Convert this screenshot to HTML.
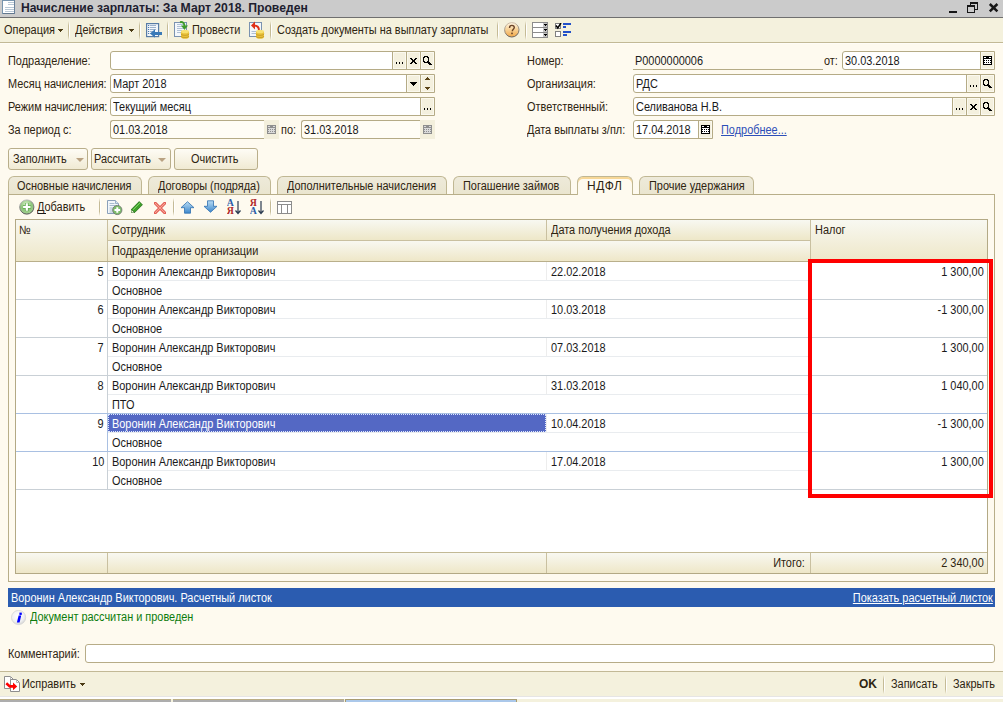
<!DOCTYPE html>
<html><head><meta charset="utf-8">
<style>
*{margin:0;padding:0;box-sizing:border-box}
html,body{width:1003px;height:702px;overflow:hidden;position:relative;background:#FEFAEF;font-family:"Liberation Sans",sans-serif;font-size:11px;color:#000}
.a{position:absolute}
.t{position:absolute;white-space:nowrap;line-height:13px;font-size:12px;color:#2E2410;transform:scaleX(0.91);transform-origin:0 0}
.t[style*="right:"]{transform-origin:100% 0}
.k{color:#1A1A1A}
.fld{position:absolute;background:#fff;border:1px solid #B5AB86;border-radius:3px 0 0 3px;height:19px}
.fb{position:absolute;height:17px;width:14px;background:#F4F0DE;border-left:1px solid #B5AB86;box-shadow:inset 1px 1px 0 #FBF9EF,inset -1px -1px 0 #FBF9EF}
.sep{position:absolute;width:2px;background:linear-gradient(rgba(244,241,221,0),#C5BB96 25%,#C5BB96 75%,rgba(244,241,221,0)) 0 0/1px 100% no-repeat,linear-gradient(rgba(255,255,255,0),#FFFFFF 25%,#FFFFFF 75%,rgba(255,255,255,0)) 1px 0/1px 100% no-repeat}
.btn{position:absolute;height:22px;border:1px solid #B9AE8A;border-radius:3px;background:linear-gradient(#FEFCF5,#F0EAD3)}
.tab{position:absolute;top:176px;height:18px;border:1px solid #C0B793;border-bottom:none;border-radius:6px 6px 0 0;background:linear-gradient(#EEEADA,#EAE5CF)}
.hdr{position:absolute;background:linear-gradient(#F8F8F1,#EEE7C8)}
.rl{position:absolute;height:1px;background:#C9D0D6}
.sl{position:absolute;height:1px;background:#E9ECEF}
</style></head><body>

<!-- title bar -->
<div class="a" style="left:0;top:0;width:1003px;height:17px;background:#CBCBCB"></div>
<div class="a" style="left:0;top:17px;width:1003px;height:1px;background:#6F6F6F"></div>
<svg class="a" style="left:2px;top:0" width="13" height="14" viewBox="0 0 13 14" shape-rendering="crispEdges">
  <rect x="0" y="0" width="13" height="14" fill="#7794AE"/>
  <rect x="1" y="1" width="11" height="12" fill="#FFFFFF"/>
  <rect x="1" y="13" width="12" height="1" fill="#62788E"/><rect x="12" y="0" width="1" height="14" fill="#68809A"/>
  <g fill="#B9C8D6"><rect x="6" y="2" width="6" height="1"/><rect x="6" y="4" width="6" height="1"/><rect x="3" y="7" width="9" height="1"/><rect x="3" y="9" width="9" height="1"/><rect x="3" y="11" width="9" height="1"/></g>
</svg>
<div class="t" style="left:21px;top:1px;font-size:12.2px;line-height:14px;font-weight:bold;color:#1E1E30;transform:none">Начисление зарплаты: За Март 2018. Проведен</div>
<svg class="a" style="left:945px;top:0px" width="58" height="17" viewBox="0 0 58 17" shape-rendering="crispEdges">
  <rect x="4" y="11" width="8" height="2" fill="#161616"/>
  <g fill="#161616">
    <rect x="25" y="2" width="8" height="2"/><rect x="32" y="2" width="1" height="8"/><rect x="29" y="9" width="4" height="1"/><rect x="25" y="2" width="1" height="3"/>
    <rect x="22" y="5" width="8" height="2"/><rect x="22" y="5" width="1" height="8"/><rect x="29" y="5" width="1" height="8"/><rect x="22" y="12" width="8" height="1"/>
  </g>
  <path d="M44.8 4l7.6 7.4M52.4 4l-7.6 7.4" stroke="#161616" stroke-width="2.5" shape-rendering="auto"/>
</svg>

<!-- top toolbar -->
<div class="a" style="left:0;top:18px;width:1003px;height:24px;background:#F4F1DD"></div>
<div class="a" style="left:0;top:42px;width:1003px;height:1px;background:#C2B996"></div>
<div class="a" style="left:0;top:43px;width:1003px;height:1px;background:#FFFDF7"></div>

<div class="t" style="left:4px;top:24px">Операция</div>
<svg class="a" style="left:58px;top:29px" width="5" height="3" shape-rendering="crispEdges"><path d="M0 0h5v1h-1v1h-1v1h-1v-1h-1v-1h-1z" fill="#4A3A14"/></svg>
<div class="sep" style="left:68px;top:21px;height:19px"></div>
<div class="t" style="left:75px;top:24px">Действия</div>
<svg class="a" style="left:129px;top:29px" width="5" height="3" shape-rendering="crispEdges"><path d="M0 0h5v1h-1v1h-1v1h-1v-1h-1v-1h-1z" fill="#4A3A14"/></svg>
<div class="sep" style="left:139px;top:21px;height:19px"></div>
<svg class="a" style="left:145px;top:22px" width="18" height="16" viewBox="0 0 18 16">
  <rect x="1.6" y="1.6" width="12" height="13" fill="#F3F7FB" stroke="#587CA6" stroke-width="1.2"/>
  <path d="M5 3.5h6M5 5.5h6M5 7.5h6M5 9.5h3M5 11.5h2" stroke="#9DB2CC" stroke-width="1"/>
  <path d="M3 3.5h1.2M3 5.5h1.2M3 7.5h1.2M3 9.5h1.2M3 11.5h1.2" stroke="#4A78B0" stroke-width="1"/>
  <rect x="9" y="10" width="8" height="3" fill="#3A7AB8"/>
  <path d="M5 11.5L10 7.3v8.4z" fill="#3A7AB8"/>
</svg>
<div class="sep" style="left:167px;top:21px;height:19px"></div>
<svg class="a" style="left:173px;top:21px" width="18" height="18" viewBox="0 0 18 18">
  <rect x="1.5" y="1.5" width="12" height="14" fill="#F3F7FB" stroke="#7A92B0" stroke-width="1"/>
  <path d="M4 3.5h7M4 5.5h7M4 7.5h7M4 9.5h5M4 11.5h4" stroke="#AFC0D6" stroke-width="1"/>
  <path d="M7 1.2c3 -0.5 4.5 1 4.5 4" fill="none" stroke="#3E9A2A" stroke-width="2"/>
  <path d="M8 4.5h7l-3.5 4.5z" fill="#3E9A2A"/>
  <path d="M8 10.5v5.5a4 1.8 0 0 0 8 0v-5.5z" fill="#E8C23A"/>
  <ellipse cx="12" cy="10.5" rx="4" ry="1.8" fill="#F8E070"/>
  <path d="M8 12.8a4 1.6 0 0 0 8 0M8 15a4 1.6 0 0 0 8 0" fill="none" stroke="#C09020" stroke-width="0.7"/>
</svg>
<div class="t" style="left:192px;top:24px">Провести</div>
<svg class="a" style="left:248px;top:21px" width="18" height="18" viewBox="0 0 18 18">
  <rect x="1.5" y="1.5" width="12" height="14" fill="#F3F7FB" stroke="#7A92B0" stroke-width="1"/>
  <path d="M3.5 10.5h5M3.5 12.5h5" stroke="#AFC0D6" stroke-width="1"/>
  <path d="M6 4.5c3.5 0 5 1.5 5 5" fill="none" stroke="#E03018" stroke-width="2"/>
  <path d="M3 4.5l4-4v8z" fill="#E03018"/>
  <path d="M8 10.5v5.5a4 1.8 0 0 0 8 0v-5.5z" fill="#E8C23A"/>
  <ellipse cx="12" cy="10.5" rx="4" ry="1.8" fill="#F8E070"/>
  <path d="M8 12.8a4 1.6 0 0 0 8 0M8 15a4 1.6 0 0 0 8 0" fill="none" stroke="#C09020" stroke-width="0.7"/>
</svg>
<div class="sep" style="left:270px;top:21px;height:19px"></div>
<div class="t" style="left:277px;top:24px">Создать документы на выплату зарплаты</div>
<div class="sep" style="left:497px;top:21px;height:19px"></div>
<svg class="a" style="left:504px;top:22px" width="16" height="16" viewBox="0 0 16 16">
  <defs><linearGradient id="hg" x1="0" y1="0" x2="0" y2="1"><stop offset="0" stop-color="#FFF6E4"/><stop offset="0.45" stop-color="#F8D49A"/><stop offset="1" stop-color="#F2A848"/></linearGradient>
  <linearGradient id="hs" x1="0" y1="0" x2="0.2" y2="1"><stop offset="0" stop-color="#D8C8B0"/><stop offset="1" stop-color="#6A6460"/></linearGradient></defs>
  <circle cx="7.8" cy="7.8" r="7.2" fill="url(#hg)" stroke="url(#hs)" stroke-width="1"/>
  <path d="M5.5 6c0-1.7 1.1-2.6 2.4-2.6s2.4 0.9 2.4 2.2c0 1.6-2 1.9-2 3.6" fill="none" stroke="#6A4428" stroke-width="1.4"/>
  <rect x="7.2" y="10.6" width="1.6" height="1.6" fill="#6A4428"/>
</svg>
<div class="sep" style="left:525px;top:21px;height:19px"></div>
<svg class="a" style="left:532px;top:22px" width="16" height="16" viewBox="0 0 16 16" shape-rendering="crispEdges">
  <rect x="0" y="0" width="16" height="16" fill="#8C8C8C"/>
  <rect x="1" y="1" width="10" height="4" fill="#fff"/><rect x="1" y="6" width="10" height="4" fill="#fff"/><rect x="1" y="11" width="10" height="4" fill="#fff"/>
  <rect x="11" y="1" width="4" height="4" fill="#C4C4C4"/><rect x="11" y="6" width="4" height="4" fill="#C4C4C4"/><rect x="11" y="11" width="4" height="4" fill="#C4C4C4"/>
  <path d="M12 2h3l-1.5 2z M12 7h3l-1.5 2z M12 12h3l-1.5 2z" fill="#000"/>
</svg>
<svg class="a" style="left:555px;top:23px" width="16" height="14" viewBox="0 0 16 14" shape-rendering="crispEdges">
  <rect x="0" y="0" width="6" height="6" fill="#808080"/><rect x="1" y="1" width="4" height="4" fill="#fff"/>
  <path d="M1 2.5l1.8 2.5 3.2-5" fill="none" stroke="#000" stroke-width="1.5" shape-rendering="auto"/>
  <rect x="0" y="8" width="6" height="6" fill="#808080"/><rect x="1" y="9" width="4" height="4" fill="#fff"/>
  <rect x="8" y="0" width="8" height="2" fill="#2250C8"/><rect x="8" y="3" width="3" height="2" fill="#2250C8"/>
  <rect x="8" y="8" width="8" height="2" fill="#2250C8"/><rect x="8" y="11" width="4" height="2" fill="#2250C8"/>
</svg>


<!-- form fields left -->
<div class="t" style="left:8px;top:55px">Подразделение:</div>
<div class="t" style="left:8px;top:78px">Месяц начисления:</div>
<div class="t" style="left:8px;top:101px">Режим начисления:</div>
<div class="t" style="left:8px;top:124px">За период с:</div>
<div class="fld" style="left:110px;top:51px;width:325px;background:#fff"></div>
<div class="fb" style="left:392px;top:52px"></div>
<svg class="a" style="left:396px;top:62px" width="8" height="2" shape-rendering="crispEdges"><rect x="0" y="0" width="1" height="2" fill="#000"/><rect x="3" y="0" width="1" height="2" fill="#000"/><rect x="6" y="0" width="1" height="2" fill="#000"/></svg>
<div class="fb" style="left:406px;top:52px"></div>
<svg class="a" style="left:410px;top:58px" width="7" height="6" shape-rendering="crispEdges"><g fill="#000"><rect x="0" y="0" width="1" height="1"/><rect x="1" y="0" width="1" height="1"/><rect x="5" y="0" width="1" height="1"/><rect x="6" y="0" width="1" height="1"/><rect x="1" y="1" width="1" height="1"/><rect x="2" y="1" width="1" height="1"/><rect x="4" y="1" width="1" height="1"/><rect x="5" y="1" width="1" height="1"/><rect x="2" y="2" width="1" height="1"/><rect x="3" y="2" width="1" height="1"/><rect x="4" y="2" width="1" height="1"/><rect x="2" y="3" width="1" height="1"/><rect x="3" y="3" width="1" height="1"/><rect x="4" y="3" width="1" height="1"/><rect x="1" y="4" width="1" height="1"/><rect x="2" y="4" width="1" height="1"/><rect x="4" y="4" width="1" height="1"/><rect x="5" y="4" width="1" height="1"/><rect x="0" y="5" width="1" height="1"/><rect x="1" y="5" width="1" height="1"/><rect x="5" y="5" width="1" height="1"/><rect x="6" y="5" width="1" height="1"/></g></svg>
<div class="fb" style="left:420px;top:52px"></div>
<svg class="a" style="left:423px;top:56px" width="9" height="9" shape-rendering="crispEdges"><g fill="#000"><rect x="1" y="0" width="1" height="1"/><rect x="2" y="0" width="1" height="1"/><rect x="3" y="0" width="1" height="1"/><rect x="4" y="0" width="1" height="1"/><rect x="0" y="1" width="1" height="1"/><rect x="1" y="1" width="1" height="1"/><rect x="4" y="1" width="1" height="1"/><rect x="5" y="1" width="1" height="1"/><rect x="0" y="2" width="1" height="1"/><rect x="5" y="2" width="1" height="1"/><rect x="0" y="3" width="1" height="1"/><rect x="5" y="3" width="1" height="1"/><rect x="0" y="4" width="1" height="1"/><rect x="5" y="4" width="1" height="1"/><rect x="0" y="5" width="1" height="1"/><rect x="1" y="5" width="1" height="1"/><rect x="4" y="5" width="1" height="1"/><rect x="5" y="5" width="1" height="1"/><rect x="1" y="6" width="1" height="1"/><rect x="2" y="6" width="1" height="1"/><rect x="3" y="6" width="1" height="1"/><rect x="4" y="6" width="1" height="1"/><rect x="5" y="6" width="1" height="1"/><rect x="6" y="6" width="1" height="1"/><rect x="5" y="7" width="1" height="1"/><rect x="6" y="7" width="1" height="1"/><rect x="7" y="7" width="1" height="1"/><rect x="6" y="8" width="1" height="1"/><rect x="7" y="8" width="1" height="1"/><rect x="8" y="8" width="1" height="1"/></g></svg>
<div class="fld" style="left:110px;top:74px;width:325px;background:#fff"></div>
<div class="t k" style="left:113px;top:78px">Март 2018</div>
<div class="fb" style="left:406px;top:75px"></div>
<svg class="a" style="left:410px;top:82px" width="7" height="4" shape-rendering="crispEdges"><rect x="0" y="0" width="7" height="1" fill="#000"/><rect x="1" y="1" width="5" height="1" fill="#000"/><rect x="2" y="2" width="3" height="1" fill="#000"/><rect x="3" y="3" width="1" height="1" fill="#000"/></svg>
<div class="fb" style="left:420px;top:75px"></div>
<svg class="a" style="left:425px;top:77px" width="5" height="13" shape-rendering="crispEdges"><g fill="#5A4418"><rect x="2" y="0" width="1" height="1"/><rect x="1" y="1" width="3" height="1"/><rect x="0" y="2" width="5" height="1"/><rect x="0" y="10" width="5" height="1"/><rect x="1" y="11" width="3" height="1"/><rect x="2" y="12" width="1" height="1"/></g></svg>
<div class="fld" style="left:110px;top:97px;width:325px;background:#fff"></div>
<div class="t k" style="left:113px;top:101px">Текущий месяц</div>
<div class="fb" style="left:420px;top:98px"></div>
<svg class="a" style="left:424px;top:108px" width="8" height="2" shape-rendering="crispEdges"><rect x="0" y="0" width="1" height="2" fill="#000"/><rect x="3" y="0" width="1" height="2" fill="#000"/><rect x="6" y="0" width="1" height="2" fill="#000"/></svg>
<div class="fld" style="left:110px;top:120px;width:154px;border-right:none;background:#FFFDF5"></div>
<div class="t k" style="left:113px;top:124px">01.03.2018</div>
<div class="a" style="left:264px;top:120px;width:15px;height:19px;background:#F3EFDC"></div>
<svg class="a" style="left:267px;top:125px" width="9" height="9" shape-rendering="crispEdges"><rect x="0" y="0" width="9" height="9" fill="#8E8E8E"/><g fill="#DADADA"><rect x="1" y="1" width="1" height="1"/><rect x="2" y="1" width="1" height="1"/><rect x="6" y="1" width="1" height="1"/><rect x="7" y="1" width="1" height="1"/><rect x="1" y="3" width="1" height="1"/><rect x="2" y="3" width="1" height="1"/><rect x="3" y="3" width="1" height="1"/><rect x="4" y="3" width="1" height="1"/><rect x="5" y="3" width="1" height="1"/><rect x="6" y="3" width="1" height="1"/><rect x="7" y="3" width="1" height="1"/><rect x="1" y="5" width="1" height="1"/><rect x="2" y="5" width="1" height="1"/><rect x="3" y="5" width="1" height="1"/><rect x="4" y="5" width="1" height="1"/><rect x="5" y="5" width="1" height="1"/><rect x="6" y="5" width="1" height="1"/><rect x="7" y="5" width="1" height="1"/><rect x="1" y="7" width="1" height="1"/><rect x="2" y="7" width="1" height="1"/><rect x="3" y="7" width="1" height="1"/><rect x="4" y="7" width="1" height="1"/><rect x="5" y="7" width="1" height="1"/><rect x="6" y="7" width="1" height="1"/><rect x="7" y="7" width="1" height="1"/><rect x="2" y="4" width="1" height="1"/><rect x="4" y="4" width="1" height="1"/><rect x="6" y="4" width="1" height="1"/><rect x="2" y="6" width="1" height="1"/><rect x="4" y="6" width="1" height="1"/><rect x="6" y="6" width="1" height="1"/></g></svg>
<div class="t" style="left:281px;top:124px">по:</div>
<div class="fld" style="left:301px;top:120px;width:119px;border-right:none;background:#FFFDF5"></div>
<div class="t k" style="left:304px;top:124px">31.03.2018</div>
<div class="a" style="left:420px;top:120px;width:15px;height:19px;background:#F3EFDC"></div>
<svg class="a" style="left:423px;top:125px" width="9" height="9" shape-rendering="crispEdges"><rect x="0" y="0" width="9" height="9" fill="#8E8E8E"/><g fill="#DADADA"><rect x="1" y="1" width="1" height="1"/><rect x="2" y="1" width="1" height="1"/><rect x="6" y="1" width="1" height="1"/><rect x="7" y="1" width="1" height="1"/><rect x="1" y="3" width="1" height="1"/><rect x="2" y="3" width="1" height="1"/><rect x="3" y="3" width="1" height="1"/><rect x="4" y="3" width="1" height="1"/><rect x="5" y="3" width="1" height="1"/><rect x="6" y="3" width="1" height="1"/><rect x="7" y="3" width="1" height="1"/><rect x="1" y="5" width="1" height="1"/><rect x="2" y="5" width="1" height="1"/><rect x="3" y="5" width="1" height="1"/><rect x="4" y="5" width="1" height="1"/><rect x="5" y="5" width="1" height="1"/><rect x="6" y="5" width="1" height="1"/><rect x="7" y="5" width="1" height="1"/><rect x="1" y="7" width="1" height="1"/><rect x="2" y="7" width="1" height="1"/><rect x="3" y="7" width="1" height="1"/><rect x="4" y="7" width="1" height="1"/><rect x="5" y="7" width="1" height="1"/><rect x="6" y="7" width="1" height="1"/><rect x="7" y="7" width="1" height="1"/><rect x="2" y="4" width="1" height="1"/><rect x="4" y="4" width="1" height="1"/><rect x="6" y="4" width="1" height="1"/><rect x="2" y="6" width="1" height="1"/><rect x="4" y="6" width="1" height="1"/><rect x="6" y="6" width="1" height="1"/></g></svg>
<!-- form fields right -->
<div class="t" style="left:527px;top:55px">Номер:</div>
<div class="t" style="left:527px;top:78px">Организация:</div>
<div class="t" style="left:527px;top:101px">Ответственный:</div>
<div class="t" style="left:527px;top:124px">Дата выплаты з/пл:</div>
<div class="t k" style="left:635px;top:55px">P0000000006</div>
<div class="a" style="left:633px;top:69px;width:190px;height:1px;background:#B5AB86"></div>
<div class="t" style="left:824px;top:55px">от:</div>
<div class="fld" style="left:842px;top:51px;width:153px;background:#fff"></div>
<div class="t k" style="left:845px;top:55px">30.03.2018</div>
<div class="fb" style="left:980px;top:52px"></div>
<svg class="a" style="left:983px;top:56px" width="9" height="9" shape-rendering="crispEdges"><rect x="0" y="0" width="9" height="9" fill="#000"/><g fill="#fff"><rect x="1" y="1" width="1" height="1"/><rect x="2" y="1" width="1" height="1"/><rect x="6" y="1" width="1" height="1"/><rect x="7" y="1" width="1" height="1"/><rect x="1" y="3" width="1" height="1"/><rect x="2" y="3" width="1" height="1"/><rect x="3" y="3" width="1" height="1"/><rect x="4" y="3" width="1" height="1"/><rect x="5" y="3" width="1" height="1"/><rect x="6" y="3" width="1" height="1"/><rect x="7" y="3" width="1" height="1"/><rect x="1" y="5" width="1" height="1"/><rect x="2" y="5" width="1" height="1"/><rect x="3" y="5" width="1" height="1"/><rect x="4" y="5" width="1" height="1"/><rect x="5" y="5" width="1" height="1"/><rect x="6" y="5" width="1" height="1"/><rect x="7" y="5" width="1" height="1"/><rect x="1" y="7" width="1" height="1"/><rect x="2" y="7" width="1" height="1"/><rect x="3" y="7" width="1" height="1"/><rect x="4" y="7" width="1" height="1"/><rect x="5" y="7" width="1" height="1"/><rect x="6" y="7" width="1" height="1"/><rect x="7" y="7" width="1" height="1"/><rect x="2" y="4" width="1" height="1"/><rect x="4" y="4" width="1" height="1"/><rect x="6" y="4" width="1" height="1"/><rect x="2" y="6" width="1" height="1"/><rect x="4" y="6" width="1" height="1"/><rect x="6" y="6" width="1" height="1"/></g></svg>
<div class="fld" style="left:633px;top:74px;width:362px;background:#fff"></div>
<div class="t k" style="left:636px;top:78px">РДС</div>
<div class="fb" style="left:966px;top:75px"></div>
<svg class="a" style="left:970px;top:85px" width="8" height="2" shape-rendering="crispEdges"><rect x="0" y="0" width="1" height="2" fill="#000"/><rect x="3" y="0" width="1" height="2" fill="#000"/><rect x="6" y="0" width="1" height="2" fill="#000"/></svg>
<div class="fb" style="left:980px;top:75px"></div>
<svg class="a" style="left:983px;top:79px" width="9" height="9" shape-rendering="crispEdges"><g fill="#000"><rect x="1" y="0" width="1" height="1"/><rect x="2" y="0" width="1" height="1"/><rect x="3" y="0" width="1" height="1"/><rect x="4" y="0" width="1" height="1"/><rect x="0" y="1" width="1" height="1"/><rect x="1" y="1" width="1" height="1"/><rect x="4" y="1" width="1" height="1"/><rect x="5" y="1" width="1" height="1"/><rect x="0" y="2" width="1" height="1"/><rect x="5" y="2" width="1" height="1"/><rect x="0" y="3" width="1" height="1"/><rect x="5" y="3" width="1" height="1"/><rect x="0" y="4" width="1" height="1"/><rect x="5" y="4" width="1" height="1"/><rect x="0" y="5" width="1" height="1"/><rect x="1" y="5" width="1" height="1"/><rect x="4" y="5" width="1" height="1"/><rect x="5" y="5" width="1" height="1"/><rect x="1" y="6" width="1" height="1"/><rect x="2" y="6" width="1" height="1"/><rect x="3" y="6" width="1" height="1"/><rect x="4" y="6" width="1" height="1"/><rect x="5" y="6" width="1" height="1"/><rect x="6" y="6" width="1" height="1"/><rect x="5" y="7" width="1" height="1"/><rect x="6" y="7" width="1" height="1"/><rect x="7" y="7" width="1" height="1"/><rect x="6" y="8" width="1" height="1"/><rect x="7" y="8" width="1" height="1"/><rect x="8" y="8" width="1" height="1"/></g></svg>
<div class="fld" style="left:633px;top:97px;width:362px;background:#fff"></div>
<div class="t k" style="left:636px;top:101px">Селиванова Н.В.</div>
<div class="fb" style="left:952px;top:98px"></div>
<svg class="a" style="left:956px;top:108px" width="8" height="2" shape-rendering="crispEdges"><rect x="0" y="0" width="1" height="2" fill="#000"/><rect x="3" y="0" width="1" height="2" fill="#000"/><rect x="6" y="0" width="1" height="2" fill="#000"/></svg>
<div class="fb" style="left:966px;top:98px"></div>
<svg class="a" style="left:970px;top:104px" width="7" height="6" shape-rendering="crispEdges"><g fill="#000"><rect x="0" y="0" width="1" height="1"/><rect x="1" y="0" width="1" height="1"/><rect x="5" y="0" width="1" height="1"/><rect x="6" y="0" width="1" height="1"/><rect x="1" y="1" width="1" height="1"/><rect x="2" y="1" width="1" height="1"/><rect x="4" y="1" width="1" height="1"/><rect x="5" y="1" width="1" height="1"/><rect x="2" y="2" width="1" height="1"/><rect x="3" y="2" width="1" height="1"/><rect x="4" y="2" width="1" height="1"/><rect x="2" y="3" width="1" height="1"/><rect x="3" y="3" width="1" height="1"/><rect x="4" y="3" width="1" height="1"/><rect x="1" y="4" width="1" height="1"/><rect x="2" y="4" width="1" height="1"/><rect x="4" y="4" width="1" height="1"/><rect x="5" y="4" width="1" height="1"/><rect x="0" y="5" width="1" height="1"/><rect x="1" y="5" width="1" height="1"/><rect x="5" y="5" width="1" height="1"/><rect x="6" y="5" width="1" height="1"/></g></svg>
<div class="fb" style="left:980px;top:98px"></div>
<svg class="a" style="left:983px;top:102px" width="9" height="9" shape-rendering="crispEdges"><g fill="#000"><rect x="1" y="0" width="1" height="1"/><rect x="2" y="0" width="1" height="1"/><rect x="3" y="0" width="1" height="1"/><rect x="4" y="0" width="1" height="1"/><rect x="0" y="1" width="1" height="1"/><rect x="1" y="1" width="1" height="1"/><rect x="4" y="1" width="1" height="1"/><rect x="5" y="1" width="1" height="1"/><rect x="0" y="2" width="1" height="1"/><rect x="5" y="2" width="1" height="1"/><rect x="0" y="3" width="1" height="1"/><rect x="5" y="3" width="1" height="1"/><rect x="0" y="4" width="1" height="1"/><rect x="5" y="4" width="1" height="1"/><rect x="0" y="5" width="1" height="1"/><rect x="1" y="5" width="1" height="1"/><rect x="4" y="5" width="1" height="1"/><rect x="5" y="5" width="1" height="1"/><rect x="1" y="6" width="1" height="1"/><rect x="2" y="6" width="1" height="1"/><rect x="3" y="6" width="1" height="1"/><rect x="4" y="6" width="1" height="1"/><rect x="5" y="6" width="1" height="1"/><rect x="6" y="6" width="1" height="1"/><rect x="5" y="7" width="1" height="1"/><rect x="6" y="7" width="1" height="1"/><rect x="7" y="7" width="1" height="1"/><rect x="6" y="8" width="1" height="1"/><rect x="7" y="8" width="1" height="1"/><rect x="8" y="8" width="1" height="1"/></g></svg>
<div class="fld" style="left:633px;top:120px;width:80px;background:#fff"></div>
<div class="t k" style="left:636px;top:124px">17.04.2018</div>
<div class="fb" style="left:698px;top:121px"></div>
<svg class="a" style="left:701px;top:125px" width="9" height="9" shape-rendering="crispEdges"><rect x="0" y="0" width="9" height="9" fill="#000"/><g fill="#fff"><rect x="1" y="1" width="1" height="1"/><rect x="2" y="1" width="1" height="1"/><rect x="6" y="1" width="1" height="1"/><rect x="7" y="1" width="1" height="1"/><rect x="1" y="3" width="1" height="1"/><rect x="2" y="3" width="1" height="1"/><rect x="3" y="3" width="1" height="1"/><rect x="4" y="3" width="1" height="1"/><rect x="5" y="3" width="1" height="1"/><rect x="6" y="3" width="1" height="1"/><rect x="7" y="3" width="1" height="1"/><rect x="1" y="5" width="1" height="1"/><rect x="2" y="5" width="1" height="1"/><rect x="3" y="5" width="1" height="1"/><rect x="4" y="5" width="1" height="1"/><rect x="5" y="5" width="1" height="1"/><rect x="6" y="5" width="1" height="1"/><rect x="7" y="5" width="1" height="1"/><rect x="1" y="7" width="1" height="1"/><rect x="2" y="7" width="1" height="1"/><rect x="3" y="7" width="1" height="1"/><rect x="4" y="7" width="1" height="1"/><rect x="5" y="7" width="1" height="1"/><rect x="6" y="7" width="1" height="1"/><rect x="7" y="7" width="1" height="1"/><rect x="2" y="4" width="1" height="1"/><rect x="4" y="4" width="1" height="1"/><rect x="6" y="4" width="1" height="1"/><rect x="2" y="6" width="1" height="1"/><rect x="4" y="6" width="1" height="1"/><rect x="6" y="6" width="1" height="1"/></g></svg>
<div class="t" style="left:721px;top:124px;color:#2D4FB8;text-decoration:underline">Подробнее...</div>

<!-- buttons -->
<div class="btn" style="left:8px;top:148px;width:80px"></div>
<div class="t" style="left:13px;top:153px">Заполнить</div>
<svg class="a" style="left:76px;top:158px" width="8" height="4"><path d="M0 0h8L4 4z" fill="#B9A282"/></svg>
<div class="btn" style="left:91px;top:148px;width:80px"></div>
<div class="t" style="left:94px;top:153px">Рассчитать</div>
<svg class="a" style="left:158px;top:158px" width="8" height="4"><path d="M0 0h8L4 4z" fill="#B9A282"/></svg>
<div class="btn" style="left:174px;top:148px;width:84px"></div>
<div class="t" style="left:191px;top:153px">Очистить</div>

<!-- panel -->
<div class="a" style="left:8px;top:194px;width:987px;height:388px;border:1px solid #B8AE89"></div>
<div class="tab" style="left:8px;width:134px"><div class="t" style="left:8px;top:3px">Основные начисления</div></div>
<div class="tab" style="left:148px;width:123px"><div class="t" style="left:9px;top:3px">Договоры (подряда)</div></div>
<div class="tab" style="left:277px;width:170px"><div class="t" style="left:9px;top:3px">Дополнительные начисления</div></div>
<div class="tab" style="left:453px;width:118px"><div class="t" style="left:9px;top:3px">Погашение займов</div></div>
<div class="tab" style="left:577px;width:56px;height:19px;background:#FEFAEF;box-shadow:inset 0 2px 0 #F7D796"><div class="t" style="left:9px;top:3px;transform:none;letter-spacing:0.6px">НДФЛ</div></div>
<div class="tab" style="left:639px;width:115px"><div class="t" style="left:9px;top:3px">Прочие удержания</div></div>

<!-- panel toolbar -->
<svg class="a" style="left:19px;top:199px" width="16" height="16" viewBox="0 0 16 16">
  <defs><radialGradient id="ag" cx="0.45" cy="0.3" r="0.75"><stop offset="0" stop-color="#D4EEC4"/><stop offset="0.55" stop-color="#8CC47A"/><stop offset="1" stop-color="#A8D498"/></radialGradient>
  <linearGradient id="agr" x1="0" y1="0" x2="0.3" y2="1"><stop offset="0" stop-color="#C8C8C8"/><stop offset="1" stop-color="#505050"/></linearGradient></defs>
  <circle cx="7.8" cy="8" r="7.1" fill="url(#ag)" stroke="url(#agr)" stroke-width="1"/>
  <path d="M7.8 4v8M3.8 8h8" stroke="#5AA848" stroke-width="3.6"/>
  <path d="M7.8 4.3v7.4M4.1 8h7.4" stroke="#fff" stroke-width="2.2"/>
</svg>
<div class="t" style="left:37px;top:201px">Добавить</div>
<div class="a" style="left:38px;top:213px;width:8px;height:1px;background:#1a1a1a"></div>
<div class="sep" style="left:99px;top:198px;height:18px"></div>
<svg class="a" style="left:107px;top:200px" width="16" height="16" viewBox="0 0 16 16">
  <path d="M0.5 0.5h8l3 3v10h-11z" fill="#F2F6FA" stroke="#8AA0BA"/>
  <path d="M8.5 0.5v3h3" fill="#DCE6F0" stroke="#9AB0C8"/>
  <path d="M2.5 3.5h5M2.5 5.5h6M2.5 8h5M2.5 10h4M2.5 12h4" stroke="#A8BCD0"/>
  <circle cx="10.3" cy="10" r="4.6" fill="#7CBC6A" stroke="#707870" stroke-width="0.9"/>
  <path d="M10.3 7.2v5.6M7.5 10h5.6" stroke="#fff" stroke-width="2"/>
</svg>
<svg class="a" style="left:131px;top:201px" width="12" height="12" viewBox="0 0 12 12">
  <path d="M0.4 8.4L8.2 0.6L11.4 3.8L3.6 11.6Z" fill="#3EA02A" stroke="#1D6A12" stroke-width="0.8"/>
  <path d="M2.2 8.6L9 1.8" stroke="#8CE070" stroke-width="1"/>
  <path d="M0.4 8.4L3.6 11.6L0.2 11.8Z" fill="#F0F0E0" stroke="#1D6A12" stroke-width="0.6"/>
</svg>
<svg class="a" style="left:154px;top:202px" width="12" height="12" viewBox="0 0 12 12">
  <path d="M1.3 1.3l9.4 9.4M10.7 1.3l-9.4 9.4" stroke="#E0524A" stroke-width="3" stroke-linecap="round"/>
  <path d="M1.3 1.3l9.4 9.4M10.7 1.3l-9.4 9.4" stroke="#F6A898" stroke-width="1.1" stroke-linecap="round"/>
</svg>
<div class="sep" style="left:173px;top:198px;height:18px"></div>
<svg class="a" style="left:180px;top:201px" width="15" height="13" viewBox="0 0 15 13">
  <defs><linearGradient id="bu" x1="0" y1="0" x2="0" y2="1"><stop offset="0" stop-color="#B8DCF4"/><stop offset="1" stop-color="#3E88CC"/></linearGradient></defs>
  <path d="M7.5 0.7l6.5 6h-3.5v5.5h-6v-5.5h-3.5z" fill="url(#bu)" stroke="#3070B0" stroke-width="0.8"/>
</svg>
<svg class="a" style="left:203px;top:200px" width="15" height="13" viewBox="0 0 15 13">
  <defs><linearGradient id="bd" x1="0" y1="0" x2="0" y2="1"><stop offset="0" stop-color="#B8DCF4"/><stop offset="1" stop-color="#3E88CC"/></linearGradient></defs>
  <path d="M7.5 12.3l6.5-6h-3.5v-5.5h-6v5.5h-3.5z" fill="url(#bd)" stroke="#3070B0" stroke-width="0.8"/>
</svg>
<svg class="a" style="left:227px;top:199px" width="15" height="16" viewBox="0 0 15 16">
  <text x="-0.3" y="7.3" font-family="Liberation Serif" font-weight="bold" font-size="9.8" fill="#2A5CA8">A</text>
  <text x="-0.3" y="15.3" font-family="Liberation Serif" font-weight="bold" font-size="9.8" fill="#B02828">Я</text>
  <path d="M11 2v12M8.5 11.5l2.5 3 2.5-3" fill="none" stroke="#2A3A50" stroke-width="1.2"/>
</svg>
<svg class="a" style="left:250px;top:199px" width="15" height="16" viewBox="0 0 15 16">
  <text x="-0.3" y="7.3" font-family="Liberation Serif" font-weight="bold" font-size="9.8" fill="#B02828">Я</text>
  <text x="-0.3" y="15.3" font-family="Liberation Serif" font-weight="bold" font-size="9.8" fill="#2A5CA8">A</text>
  <path d="M11 2v12M8.5 11.5l2.5 3 2.5-3" fill="none" stroke="#2A3A50" stroke-width="1.2"/>
</svg>
<div class="sep" style="left:270px;top:198px;height:18px"></div>
<svg class="a" style="left:277px;top:201px" width="15" height="13" viewBox="0 0 15 13">
  <rect x="0.5" y="0.5" width="14" height="12" fill="#fff" stroke="#8C8C8C"/>
  <path d="M0.5 3.5h14M4.5 3.5v9M10.5 3.5v9" stroke="#8C8C8C"/>
</svg>


<!-- table -->
<div class="a" style="left:15px;top:219px;width:973px;height:355px;background:#fff;border:1px solid #B3A985"></div>
<div class="hdr" style="left:16px;top:220px;width:971px;height:41px"></div>
<div class="hdr" style="left:108px;top:220px;width:702px;height:20px"></div>
<div class="hdr" style="left:108px;top:241px;width:702px;height:20px"></div>
<div class="a" style="left:107px;top:220px;width:1px;height:41px;background:#C9C0A0"></div>
<div class="a" style="left:546px;top:220px;width:1px;height:20px;background:#C9C0A0"></div>
<div class="a" style="left:810px;top:220px;width:1px;height:41px;background:#C9C0A0"></div>
<div class="a" style="left:108px;top:240px;width:702px;height:1px;background:#C9C0A0"></div>
<div class="a" style="left:16px;top:261px;width:971px;height:1px;background:#B9AF8B"></div>
<div class="t" style="left:19px;top:224px">№</div>
<div class="t" style="left:112px;top:224px">Сотрудник</div>
<div class="t" style="left:551px;top:224px">Дата получения дохода</div>
<div class="t" style="left:815px;top:224px">Налог</div>
<div class="t" style="left:112px;top:245px">Подразделение организации</div>
<div class="t k" style="right:899px;top:266px">5</div>
<div class="t k" style="left:112px;top:266px">Воронин Александр Викторович</div>
<div class="t k" style="left:551px;top:266px">22.02.2018</div>
<div class="t k" style="right:19px;top:266px">1 300,00</div>
<div class="t k" style="left:112px;top:285px">Основное</div>
<div class="sl" style="left:108px;top:280px;width:702px"></div>
<div class="a" style="left:546px;top:262px;width:1px;height:18px;background:#EDEDED"></div>
<div class="a" style="left:810px;top:262px;width:1px;height:37px;background:#EDEDED"></div>
<div class="rl" style="left:16px;top:299px;width:971px"></div>
<div class="t k" style="right:899px;top:304px">6</div>
<div class="t k" style="left:112px;top:304px">Воронин Александр Викторович</div>
<div class="t k" style="left:551px;top:304px">10.03.2018</div>
<div class="t k" style="right:19px;top:304px">-1 300,00</div>
<div class="t k" style="left:112px;top:323px">Основное</div>
<div class="sl" style="left:108px;top:318px;width:702px"></div>
<div class="a" style="left:546px;top:300px;width:1px;height:18px;background:#EDEDED"></div>
<div class="a" style="left:810px;top:300px;width:1px;height:37px;background:#EDEDED"></div>
<div class="rl" style="left:16px;top:337px;width:971px"></div>
<div class="t k" style="right:899px;top:342px">7</div>
<div class="t k" style="left:112px;top:342px">Воронин Александр Викторович</div>
<div class="t k" style="left:551px;top:342px">07.03.2018</div>
<div class="t k" style="right:19px;top:342px">1 300,00</div>
<div class="t k" style="left:112px;top:361px">Основное</div>
<div class="sl" style="left:108px;top:356px;width:702px"></div>
<div class="a" style="left:546px;top:338px;width:1px;height:18px;background:#EDEDED"></div>
<div class="a" style="left:810px;top:338px;width:1px;height:37px;background:#EDEDED"></div>
<div class="rl" style="left:16px;top:375px;width:971px"></div>
<div class="t k" style="right:899px;top:380px">8</div>
<div class="t k" style="left:112px;top:380px">Воронин Александр Викторович</div>
<div class="t k" style="left:551px;top:380px">31.03.2018</div>
<div class="t k" style="right:19px;top:380px">1 040,00</div>
<div class="t k" style="left:112px;top:399px">ПТО</div>
<div class="sl" style="left:108px;top:394px;width:702px"></div>
<div class="a" style="left:546px;top:376px;width:1px;height:18px;background:#EDEDED"></div>
<div class="a" style="left:810px;top:376px;width:1px;height:37px;background:#EDEDED"></div>
<div class="rl" style="left:16px;top:413px;width:971px"></div>
<div class="t k" style="right:899px;top:418px">9</div>
<div class="t k" style="left:112px;top:418px">Воронин Александр Викторович</div>
<div class="t k" style="left:551px;top:418px">10.04.2018</div>
<div class="t k" style="right:19px;top:418px">-1 300,00</div>
<div class="t k" style="left:112px;top:437px">Основное</div>
<div class="sl" style="left:108px;top:432px;width:702px"></div>
<div class="a" style="left:546px;top:414px;width:1px;height:18px;background:#EDEDED"></div>
<div class="a" style="left:810px;top:414px;width:1px;height:37px;background:#EDEDED"></div>
<div class="rl" style="left:16px;top:451px;width:971px"></div>
<div class="t k" style="right:899px;top:456px">10</div>
<div class="t k" style="left:112px;top:456px">Воронин Александр Викторович</div>
<div class="t k" style="left:551px;top:456px">17.04.2018</div>
<div class="t k" style="right:19px;top:456px">1 300,00</div>
<div class="t k" style="left:112px;top:475px">Основное</div>
<div class="sl" style="left:108px;top:470px;width:702px"></div>
<div class="a" style="left:546px;top:452px;width:1px;height:18px;background:#EDEDED"></div>
<div class="a" style="left:810px;top:452px;width:1px;height:37px;background:#EDEDED"></div>
<div class="rl" style="left:16px;top:489px;width:971px"></div>
<div class="a" style="left:107px;top:262px;width:1px;height:228px;background:#C9D0D6"></div>

<div class="rl" style="left:16px;top:413px;width:971px;background:#A9C0E2"></div>
<div class="rl" style="left:16px;top:451px;width:971px;background:#A9C0E2"></div>
<div class="a" style="left:107px;top:414px;width:1px;height:37px;background:#A9C0E2"></div>
<div class="a" style="left:108px;top:414px;width:438px;height:18px;background:#5468C4;border:1px dotted #E0E8FF"></div>
<div class="t" style="left:112px;top:418px;color:#fff">Воронин Александр Викторович</div>
<!-- footer -->
<div class="hdr" style="left:16px;top:552px;width:971px;height:21px;border-top:1px solid #C2B995"></div>
<div class="a" style="left:107px;top:553px;width:1px;height:20px;background:#C9C0A0"></div>
<div class="a" style="left:546px;top:553px;width:1px;height:20px;background:#C9C0A0"></div>
<div class="a" style="left:810px;top:553px;width:1px;height:20px;background:#C9C0A0"></div>
<div class="t" style="right:198px;top:557px">Итого:</div>
<div class="t" style="right:19px;top:557px">2 340,00</div>
<!-- red box -->
<div class="a" style="left:808px;top:259px;width:185px;height:239px;border:4px solid #FF0000"></div>


<!-- blue bar -->
<div class="a" style="left:8px;top:588px;width:987px;height:19px;background:#2B5CB0"></div>
<div class="t" style="left:11px;top:592px;color:#fff">Воронин Александр Викторович. Расчетный листок</div>
<div class="t" style="right:10px;top:592px;color:#fff;text-decoration:underline">Показать расчетный листок</div>
<!-- info -->
<svg class="a" style="left:11px;top:610px" width="16" height="16" viewBox="0 0 16 16">
  <defs><radialGradient id="ig" cx="0.45" cy="0.4" r="0.7"><stop offset="0" stop-color="#FFFFFF"/><stop offset="0.6" stop-color="#F0F0F0"/><stop offset="1" stop-color="#C8C8C8"/></radialGradient></defs>
  <circle cx="7.6" cy="7.5" r="7.1" fill="url(#ig)" stroke="#D4D4D4" stroke-width="0.8"/>
  <rect x="8.4" y="2.6" width="2.4" height="2.3" fill="#0000FF"/>
  <path d="M7.6 5.6H10.2L8.6 12.6H5.9Z" fill="#0000FF"/>
</svg>
<div class="t" style="left:30px;top:611px;color:#0C7C0C">Документ рассчитан и проведен</div>
<!-- comment -->
<div class="t" style="left:8px;top:648px">Комментарий:</div>
<div class="a" style="left:85px;top:644px;width:910px;height:19px;background:#fff;border:1px solid #B7AC87;border-radius:3px"></div>
<!-- bottom toolbar -->
<div class="a" style="left:0;top:671px;width:1003px;height:1px;background:#C2B996"></div>
<div class="a" style="left:0;top:672px;width:1003px;height:24px;background:#F4F1DD"></div>
<div class="a" style="left:0;top:696px;width:1003px;height:1px;background:#E6E5E4"></div>
<div class="a" style="left:0;top:697px;width:1003px;height:2px;background:#FFFFFF"></div>
<div class="a" style="left:0;top:699px;width:1003px;height:3px;background:#F4F1DD"></div>
<div class="a" style="left:0;top:699px;width:171px;height:3px;background:#ADADAD;border-top:1px solid #BBAE84"></div>
<div class="a" style="left:173px;top:699px;width:171px;height:3px;background:#ADADAD;border-top:1px solid #BBAE84"></div>
<div class="a" style="left:345px;top:699px;width:172px;height:3px;background:#ABC8EA;border:1px solid #A89C70;border-bottom:none"></div>
<svg class="a" style="left:4px;top:676px" width="17" height="17" viewBox="0 0 17 17">
  <path d="M0.5 0.5H6.5L9.5 3.5V12.5H0.5Z" fill="#fff" stroke="#8E8E8E"/>
  <path d="M6.5 0.5V3.5H9.5" fill="none" stroke="#B8B8B8"/>
  <path d="M6.5 3.5H12.5L15.5 6.5V15.5H6.5Z" fill="#fff" stroke="#8E8E8E"/>
  <path d="M12.5 3.5V6.5H15.5" fill="none" stroke="#B8B8B8"/>
  <path d="M2.3 7.3L5.8 10.4H10" fill="none" stroke="#FF0000" stroke-width="2.6"/>
  <path d="M9 6.6L13.2 10.4L9 14.2Z" fill="#FF0000"/>
</svg>
<div class="t" style="left:22px;top:678px">Исправить</div>
<svg class="a" style="left:80px;top:683px" width="5" height="3" shape-rendering="crispEdges"><path d="M0 0h5v1h-1v1h-1v1h-1v-1h-1v-1h-1z" fill="#4A3A14"/></svg>
<div class="t" style="left:859px;top:678px;font-weight:bold;font-size:12px;transform:none">OK</div>
<div class="sep" style="left:883px;top:675px;height:19px"></div>
<div class="t" style="left:891px;top:678px">Записать</div>
<div class="sep" style="left:945px;top:675px;height:19px"></div>
<div class="t" style="left:953px;top:678px">Закрыть</div>

</body></html>
